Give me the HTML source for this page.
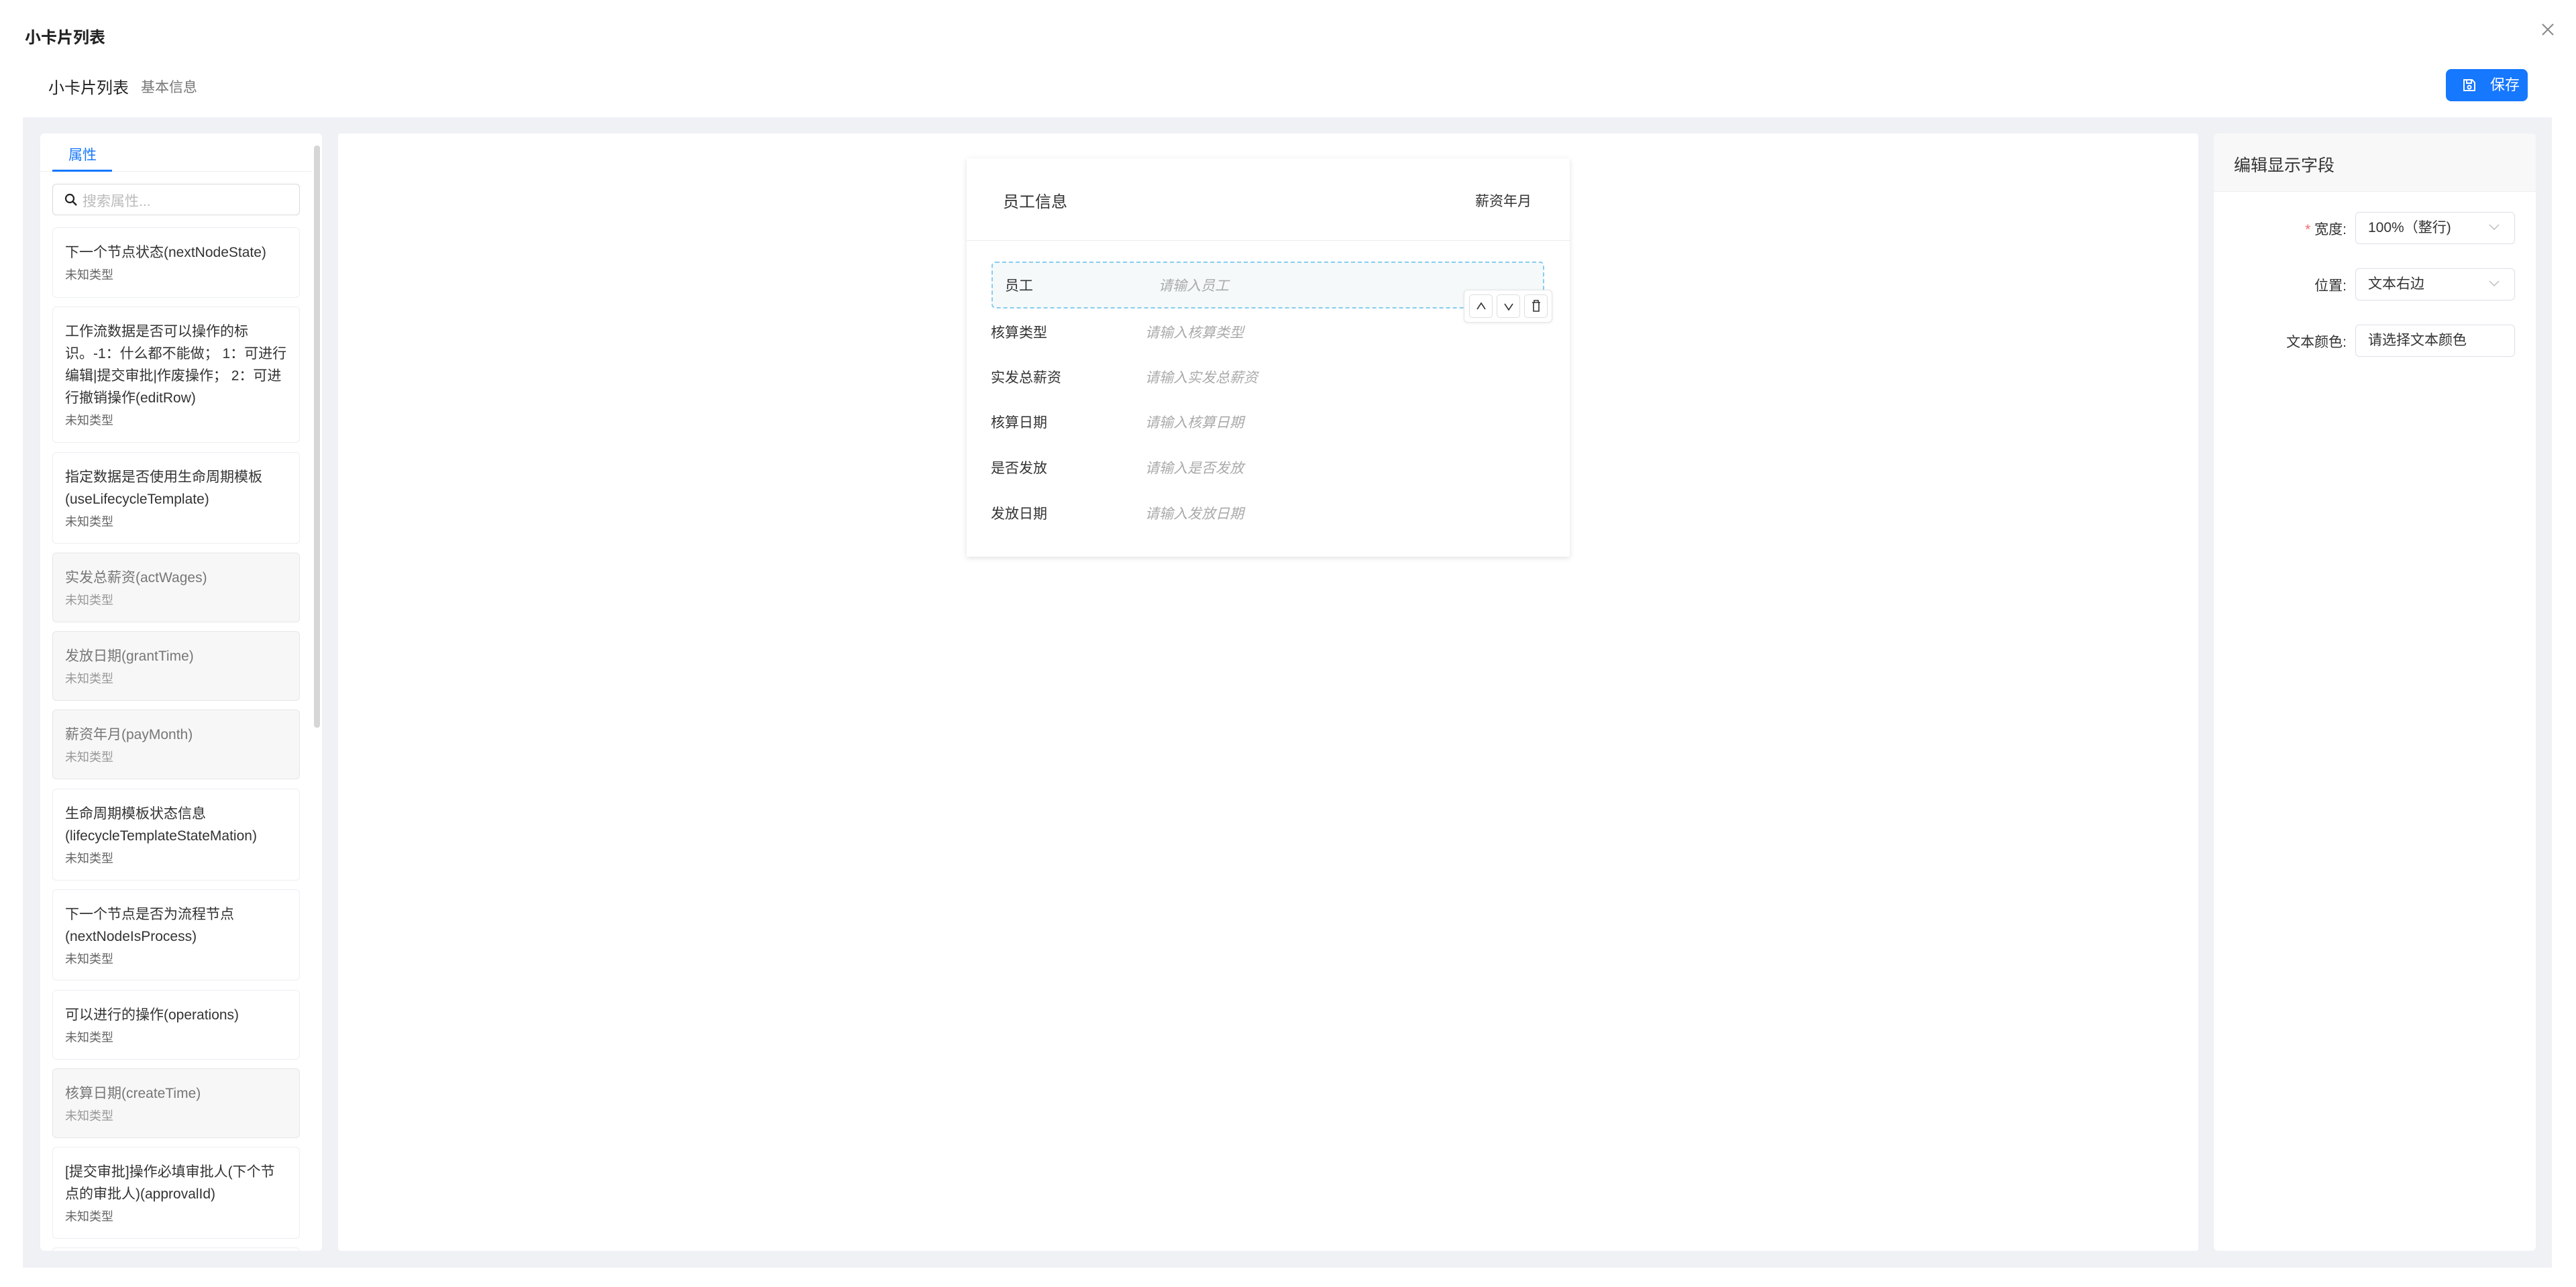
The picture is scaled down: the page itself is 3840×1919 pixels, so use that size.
<!DOCTYPE html>
<html><head><meta charset="utf-8"><style>
*{box-sizing:border-box;margin:0;padding:0}
body{width:3840px;height:1919px;background:#fff;font-family:"Liberation Sans","Noto Sans CJK SC",sans-serif;color:#333;position:relative;overflow:hidden}
.a{position:absolute}
.card{position:absolute;left:78px;width:369px;border:1px solid #ebeef2;border-radius:6px;background:#fff;padding:0 18px}
.card.g{background:#f7f7f7;border-color:#e6e6e6}
.card .t{font-size:21px;line-height:33px;color:#333;margin-top:20px}
.card.g .t{color:#777}
.card .s{font-size:18px;color:#666;margin-top:4px;line-height:26px}
.card.g .s{color:#999}
.lbl{position:absolute;left:1477px;font-size:21px;color:#333;line-height:30px}
.ph{position:absolute;left:1707px;font-size:21px;color:#aaa;font-style:italic;line-height:30px}
.sel{position:absolute;left:3511px;width:238px;height:48px;border:1px solid #dcdfe6;border-radius:6px;font-size:21px;line-height:46px;padding-left:18px;color:#333}
.fl{position:absolute;right:342px;font-size:21px;color:#333;text-align:right}
.tb{position:absolute;top:439px;width:35px;height:35px;border:1px solid #ddd;border-radius:5px;background:#fff}
</style></head><body>
<div class="a" style="left:37px;top:36px;font-size:24px;font-weight:bold;color:#222">小卡片列表</div>
<svg class="a" style="left:3788px;top:34px" width="20" height="20" viewBox="0 0 20 20"><path d="M2 2L18 18M18 2L2 18" stroke="#888" stroke-width="2"/></svg>
<div class="a" style="left:72px;top:111px;font-size:24px;color:#222">小卡片列表</div>
<div class="a" style="left:210px;top:114px;font-size:21px;color:#777">基本信息</div>
<div class="a" style="left:3646px;top:103px;width:122px;height:48px;background:#1677ff;border-radius:8px;color:#fff;font-size:22px;line-height:48px;padding-left:66px">保存</div>
<svg class="a" style="left:3670px;top:116px" width="22" height="22" viewBox="0 0 22 22"><path d="M3 3h12l4 4v12H3z M7 3v5h7V3" fill="none" stroke="#fff" stroke-width="2"/><circle cx="11" cy="14" r="2.5" fill="none" stroke="#fff" stroke-width="2"/></svg>

<div class="a" style="left:34px;top:175px;width:3770px;height:1715px;background:#eff1f5"></div>

<!-- left panel -->
<div class="a" style="left:60px;top:199px;width:420px;height:1666px;background:#fff;border-radius:6px;overflow:hidden"></div>
<div class="a" style="left:102px;top:215px;font-size:21px;color:#1677ff">属性</div>
<div class="a" style="left:60px;top:255px;width:405px;height:1px;background:#eee"></div>
<div class="a" style="left:78px;top:253px;width:89px;height:3px;background:#1677ff"></div>
<div class="a" style="left:78px;top:274px;width:369px;height:47px;border:1px solid #d9d9d9;border-radius:6px"></div>
<svg class="a" style="left:95px;top:287px" width="22" height="22" viewBox="0 0 22 22"><circle cx="9" cy="9" r="6" fill="none" stroke="#222" stroke-width="2.2"/><path d="M13.5 13.5L19 19" stroke="#222" stroke-width="2.4"/></svg>
<div class="a" style="left:123px;top:284px;font-size:21px;color:#bbb">搜索属性...</div>
<div class="a" style="left:468px;top:217px;width:9px;height:868px;background:#d6d6d6;border-radius:4px"></div>
<div style="position:absolute;left:60px;top:321px;width:405px;height:1544px;overflow:hidden">
<div style="position:relative;left:-60px;top:-321px">
<div class="card" style="top:339px;height:105px"><div class="t">下一个节点状态(nextNodeState)</div><div class="s">未知类型</div></div>
<div class="card" style="top:457px;height:203px"><div class="t">工作流数据是否可以操作的标识。-1：什么都不能做； 1：可进行编辑|提交审批|作废操作； 2：可进行撤销操作(editRow)</div><div class="s">未知类型</div></div>
<div class="card" style="top:674px;height:137px"><div class="t">指定数据是否使用生命周期模板(useLifecycleTemplate)</div><div class="s">未知类型</div></div>
<div class="card g" style="top:824px;height:104px"><div class="t">实发总薪资(actWages)</div><div class="s">未知类型</div></div>
<div class="card g" style="top:941px;height:104px"><div class="t">发放日期(grantTime)</div><div class="s">未知类型</div></div>
<div class="card g" style="top:1058px;height:104px"><div class="t">薪资年月(payMonth)</div><div class="s">未知类型</div></div>
<div class="card" style="top:1176px;height:137px"><div class="t">生命周期模板状态信息(lifecycleTemplateStateMation)</div><div class="s">未知类型</div></div>
<div class="card" style="top:1326px;height:136px"><div class="t">下一个节点是否为流程节点(nextNodeIsProcess)</div><div class="s">未知类型</div></div>
<div class="card" style="top:1476px;height:104px"><div class="t">可以进行的操作(operations)</div><div class="s">未知类型</div></div>
<div class="card g" style="top:1593px;height:104px"><div class="t">核算日期(createTime)</div><div class="s">未知类型</div></div>
<div class="card" style="top:1710px;height:137px"><div class="t">[提交审批]操作必填审批人(下个节点的审批人)(approvalId)</div><div class="s">未知类型</div></div>
<div class="card" style="top:1860px;height:104px"></div>
</div></div>

<!-- middle -->
<div class="a" style="left:504px;top:199px;width:2773px;height:1666px;background:#fff;border-radius:4px"></div>
<div class="a" style="left:1441px;top:236px;width:899px;height:594px;background:#fff;box-shadow:0 2px 8px rgba(0,0,0,.12)"></div>
<div class="a" style="left:1441px;top:358px;width:899px;height:1px;background:#ececec"></div>
<div class="a" style="left:1495px;top:281px;font-size:24px;color:#333">员工信息</div>
<div class="a" style="left:2199px;top:284px;font-size:21px;color:#333">薪资年月</div>
<div class="a" style="left:1478px;top:390px;width:824px;height:70px;border:2px dashed #87cdee;border-radius:6px;background:#f5f9fa"></div>
<div class="a" style="left:1498px;top:412px;font-size:21px;color:#333;line-height:30px">员工</div>
<div class="a" style="left:1727px;top:412px;font-size:21px;color:#aaa;font-style:italic;line-height:30px">请输入员工</div>
<div class="a" style="left:2182px;top:432px;width:132px;height:49px;background:#fff;border:1px solid #e5e5e5;border-radius:6px;box-shadow:0 1px 4px rgba(0,0,0,.08)"></div>
<div class="tb" style="left:2190px"></div><div class="tb" style="left:2231px"></div><div class="tb" style="left:2272px"></div>
<svg class="a" style="left:2199px;top:448px" width="18" height="18" viewBox="0 0 18 18"><path d="M3 13L9 4L15 13" fill="none" stroke="#333" stroke-width="1.6"/></svg>
<svg class="a" style="left:2240px;top:448px" width="18" height="18" viewBox="0 0 18 18"><path d="M3 5L9 14L15 5" fill="none" stroke="#333" stroke-width="1.6"/></svg>
<svg class="a" style="left:2281px;top:446px" width="18" height="20" viewBox="0 0 18 20"><path d="M3 5h12M6 5V2h6v3M5 5v13h8V5" fill="none" stroke="#333" stroke-width="1.6"/></svg>
<div class="lbl" style="top:482px">核算类型</div><div class="ph" style="top:482px">请输入核算类型</div>
<div class="lbl" style="top:549px">实发总薪资</div><div class="ph" style="top:549px">请输入实发总薪资</div>
<div class="lbl" style="top:616px">核算日期</div><div class="ph" style="top:616px">请输入核算日期</div>
<div class="lbl" style="top:684px">是否发放</div><div class="ph" style="top:684px">请输入是否发放</div>
<div class="lbl" style="top:752px">发放日期</div><div class="ph" style="top:752px">请输入发放日期</div>

<!-- right -->
<div class="a" style="left:3300px;top:199px;width:480px;height:1666px;background:#fff;border-radius:6px;overflow:hidden"><div style="height:87px;background:#f8f8f9;border-bottom:1px solid #eee"></div></div>
<div class="a" style="left:3330px;top:227px;font-size:25px;color:#333">编辑显示字段</div>
<div class="fl" style="top:326px"><span style="color:#f56c6c">* </span>宽度:</div>
<div class="sel" style="top:316px">100%（整行)</div>
<div class="fl" style="top:410px">位置:</div>
<div class="sel" style="top:400px">文本右边</div>
<div class="fl" style="top:494px">文本颜色:</div>
<div class="sel" style="top:484px">请选择文本颜色</div>
<svg class="a" style="left:3710px;top:332px" width="16" height="14" viewBox="0 0 16 14"><path d="M1 3L8 10L15 3" fill="none" stroke="#bbb" stroke-width="1.4"/></svg>
<svg class="a" style="left:3710px;top:416px" width="16" height="14" viewBox="0 0 16 14"><path d="M1 3L8 10L15 3" fill="none" stroke="#bbb" stroke-width="1.4"/></svg>
</body></html>
